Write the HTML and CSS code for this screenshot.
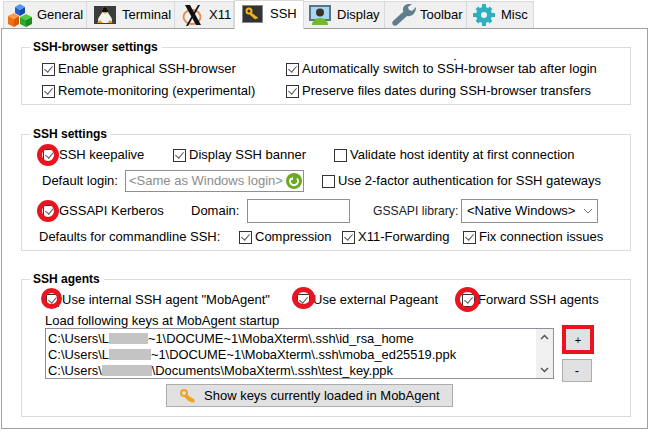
FILE: index.html
```html
<!DOCTYPE html>
<html>
<head>
<meta charset="UTF-8">
<title>MobaXterm settings</title>
<link rel="stylesheet" href="styles.css">
</head>
<body>
<div class="tabs">
  <div class="tab tab-general">
    <svg width="24" height="23" viewBox="0 0 24 23">
      <path d="M7 3l5-3 5 3-5 3z" fill="#4f9cf0"/><path d="M7 3l5 3v6l-5-3z" fill="#1e5fc8"/><path d="M17 3l-5 3v6l5-3z" fill="#1747a8"/>
      <path d="M0 12l6-3 5 3-5 3z" fill="#ff9a4a"/><path d="M0 12l6 3v8l-6-3z" fill="#f4700f"/><path d="M11 12l-5 3v8l5-3z" fill="#d85a08"/>
      <path d="M12 13l6-3 6 3-6 3z" fill="#52d044"/><path d="M12 13l6 3v7l-6-3z" fill="#2fa82a"/><path d="M24 13l-6 3v7l6-3z" fill="#1f8a20"/>
    </svg>
    General
  </div>
  <div class="tab tab-terminal">
    <svg width="22" height="18" viewBox="0 0 22 18"><rect width="22" height="18" fill="#3c3c3c"/><path d="M11 1c3 0 3 3 3 5s4 5 4 8-2 3-7 3-7 0-7-3 4-6 4-8 0-5 3-5z" fill="#f2f2f2"/><path d="M11 1c3 0 3 3 3 5l-3 1-3-1c0-2 0-5 3-5z" fill="#111"/><path d="M9 6h4l-2 2z" fill="#e8a013"/><path d="M3 17l3-3 3 3zM19 17l-3-3-3 3z" fill="#e8a013"/></svg>
    Terminal
  </div>
  <div class="tab tab-x11">
    <svg width="22" height="24" viewBox="0 0 22 24"><ellipse cx="10" cy="14" rx="8.500" ry="7" fill="none" stroke="#e88a4a" stroke-width="1.800"/><path d="M3 2h5l11 20h-5z" fill="#111"/><path d="M16 2h2L6 23H4z" fill="#111"/></svg>
    X11
  </div>
  <div class="tab tab-ssh">
    <svg width="21" height="18" viewBox="0 0 21 18"><rect x=".5" y=".5" width="20" height="17" fill="#333" stroke="#888"/><circle cx="7" cy="6" r="2.500" fill="none" stroke="#f0b41e" stroke-width="2"/><path d="M9 7.500l7 5-1 1.500-1-.5-.5 1-1-.5-5-4.500z" fill="#f0b41e"/></svg>
    SSH
  </div>
  <div class="tab tab-display">
    <svg width="22" height="20" viewBox="0 0 22 20"><rect width="22" height="16" fill="#5a7484"/><rect x="2" y="2" width="18" height="12" fill="#a5d6f2"/><circle cx="11" cy="7.500" r="4" fill="#3a3226"/><path d="M3 20c0-4 3-7 8-7s8 3 8 7z" fill="#72b92c"/></svg>
    Display
  </div>
  <div class="tab tab-toolbar">
    <svg width="24" height="22" viewBox="0 0 24 22"><path d="M24 3l-4 4-3-1-1-3 4-3c-4-1-9 1-9 5 0 1 0 2 .5 2.500L1 17c-1 1-1 3 0 4s3 1 4 0l10-9c4 1 9-2 9-9z" fill="#5f7d8d"/></svg>
    Toolbar
  </div>
  <div class="tab tab-misc">
    <svg width="22" height="22" viewBox="0 0 22 22"><circle cx="11" cy="11" r="5.500" fill="none" stroke="#2eb0bf" stroke-width="5"/><path d="M9 0h4v4H9zM9 18h4v4H9zM0 9h4v4H0zM18 9h4v4h-4zM2.500 5.300l2.800-2.800 2.800 2.800-2.800 2.800zM13.900 16.700l2.800-2.800 2.800 2.800-2.800 2.800zM2.500 16.700l2.800-2.800 2.800 2.800-2.800 2.800zM13.900 5.300l2.800-2.800 2.800 2.800-2.800 2.800z" fill="#2eb0bf"/></svg>
    Misc
  </div>
</div>

<div class="panel">
  <div class="group group-browser">
    <div class="legend">SSH-browser settings</div>
    <span class="dot"></span>
    <div class="cols">
      <div class="col col-left">
        <label class="chk"><span class="box on"></span>Enable graphical SSH-browser</label>
        <label class="chk"><span class="box on"></span>Remote-monitoring (experimental)</label>
      </div>
      <div class="col">
        <label class="chk"><span class="box on"></span>Automatically switch to SSH-browser tab after login</label>
        <label class="chk"><span class="box on"></span>Preserve files dates during SSH-browser transfers</label>
      </div>
    </div>
  </div>

  <div class="group group-settings">
    <div class="legend">SSH settings</div>
    <div class="row row-keep">
      <label class="chk w-keep"><span class="box on ring"></span>SSH keepalive</label>
      <label class="chk w-banner"><span class="box on"></span>Display SSH banner</label>
      <label class="chk"><span class="box"></span>Validate host identity at first connection</label>
    </div>
    <div class="row row-login">
      <span class="lbl-login">Default login:</span>
      <div class="login-input">&lt;Same as Windows login&gt;<span class="refresh"><svg width="16" height="16" viewBox="0 0 16 16"><circle cx="8" cy="8" r="8" fill="#6aaa1e"/><path d="M5 5.500a4 4 0 1 0 6 0" fill="none" stroke="#fff" stroke-width="2"/><path d="M3.500 7h3.500V3.500z" fill="#fff"/></svg></span></div>
      <label class="chk"><span class="box"></span>Use 2-factor authentication for SSH gateways</label>
    </div>
    <div class="row row-gss">
      <label class="chk w-gss"><span class="box on ring"></span>GSSAPI Kerberos</label>
      <span class="lbl-domain">Domain:</span>
      <div class="domain-input"></div>
      <span class="lbl-lib">GSSAPI library:</span>
      <div class="select">&lt;Native Windows&gt;<svg width="10" height="6" viewBox="0 0 10 6"><path d="M1 1l4 4 4-4" fill="none" stroke="#777"/></svg></div>
    </div>
    <div class="row row-defaults">
      <span class="lbl-defaults">Defaults for commandline SSH:</span>
      <label class="chk w-comp"><span class="box on"></span>Compression</label>
      <label class="chk w-x11"><span class="box on"></span>X11-Forwarding</label>
      <label class="chk"><span class="box on"></span>Fix connection issues</label>
    </div>
  </div>

  <div class="group group-agents">
    <div class="legend">SSH agents</div>
    <div class="row row-agents">
      <label class="chk w-internal"><span class="box on ring ring-a"></span>Use internal SSH agent "MobAgent"</label>
      <label class="chk w-pageant"><span class="box on ring ring-b"></span>Use external Pageant</label>
      <label class="chk"><span class="box on ring ring-c"></span>Forward SSH agents</label>
    </div>
    <div class="keys-title">Load following keys at MobAgent startup</div>
    <div class="keys">
      <div class="keys-main">
        <div class="listbox">
          <div class="lines">
            <div>C:\Users\L<span class="blur b1"></span>~1\DOCUME~1\MobaXterm\.ssh\id_rsa_home</div>
            <div>C:\Users\L<span class="blur b2"></span>~1\DOCUME~1\MobaXterm\.ssh\moba_ed25519.ppk</div>
            <div>C:\Users\<span class="blur b3"></span>\Documents\MobaXterm\.ssh\test_key.ppk</div>
          </div>
          <div class="scroll">
            <svg width="9" height="6" viewBox="0 0 9 6"><path d="M1 5l3.500-3.500L8 5" fill="none" stroke="#555" stroke-width="1.500"/></svg>
            <svg width="9" height="6" viewBox="0 0 9 6"><path d="M1 1l3.500 3.500L8 1" fill="none" stroke="#555" stroke-width="1.500"/></svg>
          </div>
        </div>
        <div class="btn show-keys">
          <svg width="15" height="14" viewBox="0 0 15 14"><circle cx="4" cy="4" r="3" fill="none" stroke="#f0a31e" stroke-width="2"/><path d="M6 5l9 6-1.500 3-1.500-1-1 .5-1-1.500-1 .5-5-5z" fill="#f0a31e"/></svg>
          Show keys currently loaded in MobAgent
        </div>
      </div>
      <div class="side">
        <div class="btn add">+</div>
        <div class="btn minus">-</div>
      </div>
    </div>
  </div>
</div>
</body>
</html>
```

FILE: styles.css
```css
html, body {margin:0; padding:0;}
body {width:652px; height:431px; overflow:hidden; background:#fff; color:#000; font-family:"Liberation Sans",Arial,sans-serif; font-size:13px; line-height:16px;}

.tabs {display:flex; height:28px; padding-left:3px; align-items:flex-end; position:relative; z-index:1;}
.tab {display:flex; align-items:center; flex:none; height:27px; box-sizing:border-box; background:#f0f0f0; border:1px solid #d9d9d9; border-width:1px 1px 0 0;}
.tab-general {width:84px; padding-left:4px; gap:5px; border-left-width:1px;}
.tab-terminal {width:88px; padding-left:7px; gap:6px;}
.tab-x11 {width:59px; padding-left:7px; gap:5px;}
.tab-ssh {width:70px; height:29px; margin-bottom:-1px; padding:0 0 3px 7px; gap:7px; background:#fff; border-width:1px 1px 0 1px;}
.tab-display {width:81px; padding-left:5px; gap:6px;}
.tab-toolbar {width:82px; padding-left:7px; gap:4px;}
.tab-misc {width:67px; padding-left:6px; gap:6px;}

.panel {box-sizing:border-box; width:647px; height:401px; margin-left:1px; border:1px solid #a0a0a0; padding:18px 0 0 19px;}

.group {position:relative; box-sizing:border-box; width:610px; border:1px solid #dcdcdc;}
.legend {position:absolute; top:-9px; left:8px; padding:0 4px 0 3px; background:#fff; font-weight:bold; font-size:12px;}
.dot {position:absolute; left:432px; top:11px; width:2px; height:1px; background:#e8141f;}

.group-browser {height:58px; padding:13px 0 0 20px;}
.group-settings {height:117px; margin-top:29px;}
.group-agents {height:138px; margin-top:28px;}

.cols {display:flex;}
.col {display:flex; flex-direction:column; gap:6px;}
.col-left {width:244px;}

.chk {display:flex; align-items:center; gap:3px; white-space:nowrap; height:16px;}
.box {position:relative; flex:none; box-sizing:border-box; width:13px; height:13px; border:1px solid #333; background:#fff;}
.box.on::after {content:""; position:absolute; left:3px; top:0; width:4px; height:7px; border:solid #555; border-width:0 1.5px 1.5px 0; transform:rotate(40deg);}
.ring::before {content:""; position:absolute; left:-7px; top:-6px; width:22px; height:22px; box-sizing:border-box; border:5px solid #e8141f; border-radius:50%; z-index:1;}
.ring-a::before {left:-6px; top:-7px; width:21px; height:21px;}
.ring-b::before {left:-6px; top:-8px; width:23px; height:22px;}
.ring-c::before {left:-8px; top:-8px; width:25px; height:25px;}

.row {display:flex; align-items:center; white-space:nowrap;}
.row-keep {padding:12px 0 0 21px;}
.w-keep {width:130px;}
.w-banner {width:161px;}
.row-login {margin-top:7px; padding-left:20px; height:22px;}
.lbl-login {width:83px;}
.login-input {display:flex; align-items:center; justify-content:space-between; box-sizing:border-box; width:179px; height:22px; border:1px solid #8f8f8f; padding:0 1px 0 3px; color:#8c8c8c; margin-right:18px;}
.refresh {display:flex;}
.row-gss {margin-top:7px; padding-left:21px; height:24px;}
.w-gss {width:148px;}
.lbl-domain {width:56px;}
.domain-input {box-sizing:border-box; width:103px; height:24px; border:1px solid #8f8f8f; margin-right:23px;}
.lbl-lib {width:88px; font-size:12.2px; color:#222;}
.select {display:flex; align-items:center; justify-content:space-between; box-sizing:border-box; width:137px; height:24px; border:1px solid #8f8f8f; padding:0 4px 0 5px;}
.row-defaults {margin-top:6px; padding-left:17px;}
.lbl-defaults {width:200px;}
.w-comp {width:103px;}
.w-x11 {width:121px;}

.row-agents {padding:12px 0 0 24px;}
.w-internal {width:251px;}
.w-pageant {width:165px;}
.keys-title {margin:5px 0 0 23px; height:15px; line-height:15px;}
.keys {display:flex; gap:8px; margin-left:23px;}
.keys-main {display:flex; flex-direction:column;}
.listbox {display:flex; box-sizing:border-box; width:509px; height:51px; border:1px solid #8f8f9a; font-size:12.9px;}
.lines {flex:1; padding:2px 0 0 2px; white-space:nowrap;}
.blur {display:inline-block; height:11px; background:#c4c4c4; vertical-align:-1px;}
.b1 {width:39px;}
.b2 {width:42px;}
.b3 {width:50px;}
.scroll {display:flex; flex-direction:column; justify-content:space-between; align-items:center; width:17px; background:#f0f0f0; padding:5px 0; box-sizing:border-box;}
.btn {display:flex; align-items:center; justify-content:center; box-sizing:border-box; background:#e1e1e1; border:1px solid #adadad;}
.show-keys {width:287px; height:23px; gap:9px; margin:5px 0 0 121px; justify-content:flex-start; padding-left:13px;}
.side {display:flex; flex-direction:column; gap:5px; margin-top:-3px;}
.add {width:32px; height:29px; border:4px solid #e8141f; font-size:11px;}
.minus {width:30px; height:23px;}
```
